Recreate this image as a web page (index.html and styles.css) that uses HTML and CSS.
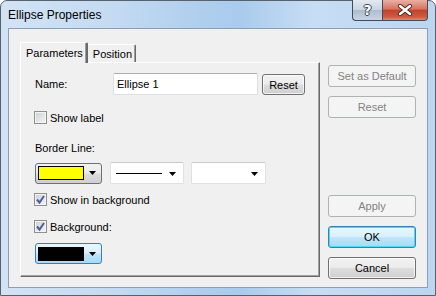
FILE: index.html
```html
<!DOCTYPE html>
<html lang="en">
<head>
	<meta charset="UTF-8">
	<title>Ellipse Properties</title>
	<link rel="stylesheet" href="styles.css">
</head>
<body>
	<div class="window">
		<div class="titlebar">
			<span class="title">Ellipse Properties</span>
			<div class="caps">
				<span class="cap help">?</span>
				<span class="cap close">
					<svg width="16" height="12" viewBox="0 0 16 12">
						<path d="M3 2 L13 10 M13 2 L3 10" stroke="#4a2a24" stroke-width="4.2" stroke-linecap="round"/>
						<path d="M3 2 L13 10 M13 2 L3 10" stroke="#fff" stroke-width="2.4" stroke-linecap="round"/>
					</svg>
				</span>
			</div>
		</div>
		<div class="client">
			<div class="tabs">
				<div class="strip">
					<div class="tab on">Parameters</div>
					<div class="tab">Position</div>
				</div>
				<div class="panel">
					<div class="row name-row">
						<span class="lbl">Name:</span>
						<div class="edit">Ellipse 1</div>
						<button class="btn small">Reset</button>
					</div>
					<div class="row chk-row r-show">
						<span class="chk"></span>
						<span>Show label</span>
					</div>
					<div class="row r-border">Border Line:</div>
					<div class="row combos">
						<div class="colcombo">
							<span class="swatch yellow"></span>
							<svg class="arrow" width="7" height="4" viewBox="0 0 7 4"><polygon points="0,0 7,0 3.5,4" fill="#000"/></svg>
						</div>
						<div class="combo line">
							<span class="stroke"></span>
							<svg class="arrow" width="7" height="4" viewBox="0 0 7 4"><polygon points="0,0 7,0 3.5,4" fill="#000"/></svg>
						</div>
						<div class="combo empty">
							<svg class="arrow" width="7" height="4" viewBox="0 0 7 4"><polygon points="0,0 7,0 3.5,4" fill="#000"/></svg>
						</div>
					</div>
					<div class="row chk-row r-bg1">
						<span class="chk">
							<svg width="11" height="11" viewBox="0 0 11 11"><path d="M2 5.5 L4.5 8.5 L9 2" fill="none" stroke="#4b5f98" stroke-width="2"/></svg>
						</span>
						<span>Show in background</span>
					</div>
					<div class="row chk-row r-bg2">
						<span class="chk">
							<svg width="11" height="11" viewBox="0 0 11 11"><path d="M2 5.5 L4.5 8.5 L9 2" fill="none" stroke="#4b5f98" stroke-width="2"/></svg>
						</span>
						<span>Background:</span>
					</div>
					<div class="row r-black">
						<div class="colcombo focus">
							<span class="swatch black"></span>
							<svg class="arrow" width="7" height="4" viewBox="0 0 7 4"><polygon points="0,0 7,0 3.5,4" fill="#000"/></svg>
						</div>
					</div>
				</div>
			</div>
			<div class="side">
				<button class="btn off">Set as Default</button>
				<button class="btn off">Reset</button>
				<div class="fill"></div>
				<button class="btn off">Apply</button>
				<button class="btn def">OK</button>
				<button class="btn">Cancel</button>
			</div>
		</div>
	</div>
</body>
</html>
```

FILE: styles.css
```css
* {
	margin: 0;
	padding: 0;
	box-sizing: border-box;
}
body {
	width: 436px;
	height: 296px;
	overflow: hidden;
	font-family: "Liberation Sans", Arial, sans-serif;
	font-size: 11px;
	color: #000;
	background: #fff;
}
.window {
	width: 436px;
	height: 296px;
	border: 1px solid #58626e;
	border-radius: 7px 7px 0 0;
	background: linear-gradient(to right, #d2e3f5 0%, #c4dbf2 25%, #b0cfee 45%, #a9cbed 55%, #c7ddf4 72%, #bcd5f0 100%);
	display: flex;
	flex-direction: column;
}
.titlebar {
	height: 27px;
	display: flex;
	align-items: flex-start;
	padding: 0 7px 0 7px;
}
.title {
	font-family: "Segoe UI", "Liberation Sans", sans-serif;
	font-size: 12px;
	margin-top: 7px;
	flex: 1;
}
.caps {
	display: flex;
	margin-top: -1px;
}
.cap {
	height: 21px;
	border: 1px solid #3f4c5e;
	border-top: none;
	display: flex;
	align-items: center;
	justify-content: center;
}
.help {
	width: 30px;
	border-right: none;
	border-radius: 0 0 0 4px;
	background: linear-gradient(#e2e9f1 0%, #c9d5e2 48%, #aebdcf 52%, #c6d4e3 100%);
	color: #fff;
	font-family: "DejaVu Sans", sans-serif;
	font-weight: bold;
	font-size: 14px;
	text-shadow: 1px 0 #3b4450, -1px 0 #3b4450, 0 1px #3b4450, 0 -1px #3b4450;
}
.close {
	width: 46px;
	border-radius: 0 0 4px 0;
	background: linear-gradient(#eab0a5 0%, #d9735f 45%, #c1442b 52%, #d05a40 85%, #e08c6e 100%);
}
.client {
	height: 260px;
	margin: 0 7px;
	border: 1px solid #8c9eb4;
	background: #f0f0f0;
	display: flex;
}
.tabs {
	width: 300px;
	margin: 13px 0 10px 11px;
	display: flex;
	flex-direction: column;
}
.strip {
	height: 20px;
	display: flex;
	align-items: flex-end;
	position: relative;
	z-index: 1;
}
.tab {
	height: 18px;
	padding: 0 3px 0 5px;
	border: 1px solid #fff;
	border-right-color: #696969;
	border-bottom: none;
	border-radius: 2px 2px 0 0;
	background: #f0f0f0;
	display: flex;
	align-items: center;
	box-shadow: inset -1px 0 #a0a0a0;
}
.tab.on {
	height: 21px;
	margin-bottom: -1px;
	padding: 0 3px 0 5px;
	border-right: 2px solid #696969;
	box-shadow: inset -1px 0 #a0a0a0;
}
.tab.on + .tab {
	border-left: none;
}
.panel {
	flex: 1;
	border: 1px solid #fff;
	border-right-color: #696969;
	border-bottom-color: #696969;
	box-shadow: inset -1px -1px #a0a0a0;
	padding: 10px 0 0 14px;
}
.row {
	display: flex;
	align-items: center;
}
.name-row {
	height: 22px;
}
.lbl {
	width: 78px;
}
.edit {
	width: 145px;
	height: 22px;
	background: #fff;
	border: 1px solid #dbdfe6;
	border-top-color: #abadb3;
	border-radius: 2px;
	padding-left: 3px;
	line-height: 20px;
}
.btn {
	font-family: "Liberation Sans", Arial, sans-serif;
	font-size: 11px;
	color: #000;
	height: 22px;
	border: 1px solid #707070;
	border-radius: 3px;
	background: linear-gradient(#f2f2f2 0%, #ebebeb 48%, #dddddd 52%, #cfcfcf 100%);
	box-shadow: inset 0 0 0 1px rgba(255,255,255,0.7);
}
.btn.small {
	width: 43px;
	height: 21px;
	margin-left: 4px;
	margin-top: 1px;
}
.chk-row {
	height: 13px;
	margin-left: -1px;
}
.chk-row span + span {
	margin-left: 3px;
}
.chk {
	width: 13px;
	height: 13px;
	border: 1px solid #8e8f8f;
	background: linear-gradient(135deg, #cbcfd5, #f6f6f6);
	box-shadow: inset 0 0 0 1px #f4f4f4;
	display: flex;
	align-items: center;
	justify-content: center;
}
.r-show {
	margin-top: 16px;
}
.r-border {
	height: 13px;
	margin-top: 17px;
}
.combos {
	margin-top: 8px;
	height: 22px;
}
.colcombo {
	width: 67px;
	height: 21px;
	border: 1px solid #707070;
	border-radius: 3px;
	background: linear-gradient(#f2f2f2 0%, #ebebeb 48%, #dddddd 52%, #cfcfcf 100%);
	display: flex;
	align-items: center;
	padding-left: 2px;
}
.colcombo.focus {
	border-color: #3c7fb1;
	background: linear-gradient(#eaf6fd 0%, #d9f0fc 48%, #bee6fd 52%, #a7d9f5 100%);
}
.swatch {
	width: 46px;
	height: 14px;
	border: 1px solid #000;
}
.yellow {
	background: #ffff00;
}
.black {
	background: #000;
}
.colcombo .arrow {
	margin-left: 5px;
}
.combo {
	height: 22px;
	background: #fff;
	border: 1px solid #e0e0e0;
	border-top-color: #c8c8c8;
	border-radius: 2px;
	display: flex;
	align-items: center;
	position: relative;
}
.combo .arrow {
	position: absolute;
	right: 7px;
	top: 9px;
}
.combo.line {
	width: 74px;
	margin-left: 8px;
}
.combo.empty {
	width: 75px;
	margin-left: 7px;
}
.stroke {
	width: 46px;
	height: 1px;
	background: #000;
	margin-left: 5px;
}
.r-bg1 {
	margin-top: 9px;
}
.r-bg2 {
	margin-top: 14px;
}
.r-black {
	margin-top: 10px;
}
.side {
	width: 88px;
	margin-left: 8px;
	padding: 36px 0 8px;
	display: flex;
	flex-direction: column;
	gap: 9px;
}
.fill {
	flex: 1;
}
.btn.off {
	color: #838383;
	border-color: #adb2b5;
	background: #f4f4f4;
	box-shadow: none;
}
.btn.def {
	border-color: #3c7fb1;
	background: linear-gradient(#eaf6fd 0%, #d9f0fc 48%, #bee6fd 52%, #a7d9f5 100%);
	box-shadow: inset 0 0 0 1px #48d8fb;
}
```
